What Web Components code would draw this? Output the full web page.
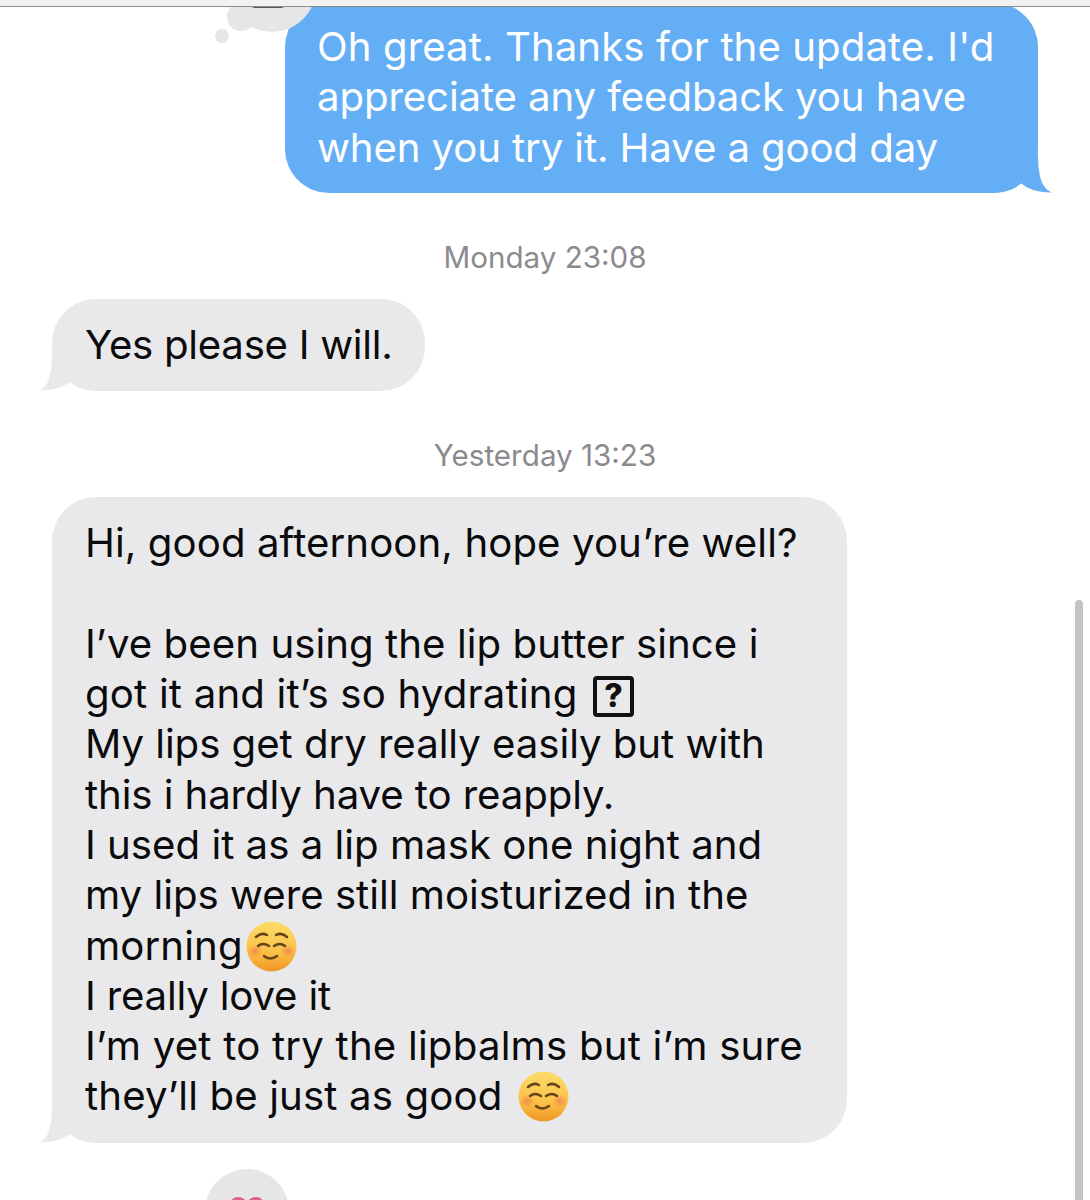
<!DOCTYPE html>
<html>
<head>
<meta charset="utf-8">
<style>
  html, body { margin: 0; background: #fff; }
  body { width: 1090px; height: 1200px; overflow: hidden; font-family: Inter, "Liberation Sans", sans-serif; }
</style>
</head>
<body>
<chat-window>
  <chat-bubble kind="sent" style="--w:753px">
    <chat-line style="--ls:.06px">Oh great. Thanks for the update. I'd</chat-line>
    <chat-line style="--ls:-.12px">appreciate any feedback you have</chat-line>
    <chat-line style="--ls:-.12px">when you try it. Have a good day</chat-line>
  </chat-bubble>
  <chat-time>Monday 23:08</chat-time>
  <chat-bubble kind="received" style="--w:373px">
    <chat-line style="--ls:-.28px">Yes please I will.</chat-line>
  </chat-bubble>
  <chat-time>Yesterday 13:23</chat-time>
  <chat-bubble kind="received" style="--w:795px">
    <chat-line style="--ls:.08px">Hi, good afternoon, hope you’re well?</chat-line>
    <chat-line></chat-line>
    <chat-line style="--ls:.05px">I’ve been using the lip butter since i</chat-line>
    <chat-line style="--ls:.18px">got it and it’s so hydrating <box-glyph></box-glyph></chat-line>
    <chat-line style="--ls:-.05px">My lips get dry really easily but with</chat-line>
    <chat-line style="--ls:-.1px">this i hardly have to reapply.</chat-line>
    <chat-line>I used it as a lip mask one night and</chat-line>
    <chat-line>my lips were still moisturized in the</chat-line>
    <chat-line style="--ls:.1px">morning<smile-emoji style="--gap:3px"></smile-emoji></chat-line>
    <chat-line style="--ls:-.19px">I really love it</chat-line>
    <chat-line style="--ls:.2px">I’m yet to try the lipbalms but i’m sure</chat-line>
    <chat-line style="--ls:.13px">they’ll be just as good <smile-emoji style="--gap:4px"></smile-emoji></chat-line>
  </chat-bubble>
  <tap-back></tap-back>
</chat-window>

<script>
class ChatWindow extends HTMLElement {
  constructor () {
    super()
    this.attachShadow({ mode: 'open' }).innerHTML = `
      <style>
        :host { display: block; position: relative; width: 1090px; height: 1200px; overflow: hidden; }
        .bar { height: 6px; background: #f2f2f2; border-bottom: 1px solid #8d8d8d; position: relative; z-index: 3; }
        .list { display: flex; flex-direction: column; }
        .thought { position: absolute; left: 0; top: 0; z-index: 2; }
        .scroll { position: absolute; left: 1075px; top: 600px; bottom: -20px; width: 8px; border-radius: 4px; background: #c4c4c4; z-index: 2; }
      </style>
      <div class="bar"></div>
      <svg class="thought" width="340" height="50" viewBox="0 0 340 50">
        <circle cx="222" cy="36" r="7" fill="#e6e6e8"/>
        <circle cx="241" cy="17" r="14" fill="#e6e6e8"/>
        <circle cx="272" cy="-12" r="44" fill="#e6e6e8"/>
        <path d="M252 8h32l-4 -2h-24z" fill="#55555a"/>
      </svg>
      <div class="list"><slot></slot></div>
      <div class="scroll"></div>
    `
  }
}

class ChatBubble extends HTMLElement {
  constructor () {
    super()
    this.attachShadow({ mode: 'open' }).innerHTML = `
      <style>
        :host { display: block; position: relative; box-sizing: border-box; width: var(--w); margin-left: 52px; padding: 21px 20px 21px 33px;
          border-radius: 44px; background: #e9e9eb; color: #0b0b0d; font-size: 40.2px; line-height: 50.3px; white-space: nowrap; }
        :host([kind="sent"]) { margin: -4px 0 0 285px; padding: 19px 20px 20px 32px; background: #64aef6; color: #fff; }
        .text { display: block; position: relative; z-index: 1; }
        svg { position: absolute; bottom: 0; }
        .in { left: -13px; }
        .out { right: -14px; }
      </style>
      <div class="text"><slot></slot></div>
      ${this.getAttribute('kind') === 'sent'
        ? '<svg class="out" width="64" height="40" viewBox="0 0 64 40"><path d="M0 40C16 40 26 36 33 30C39 36 52 40 64 39.500C55 36 50 26 50 0H0Z" fill="#64aef6"/></svg>'
        : '<svg class="in" width="64" height="40" viewBox="0 0 64 40"><path d="M64 40C48 40 38 36 31 31C25 36 12 40 0 39.500C9 36 13 26 13 0H64Z" fill="#e9e9eb"/></svg>'}
    `
  }
}

class ChatLine extends HTMLElement {
  constructor () {
    super()
    this.attachShadow({ mode: 'open' }).innerHTML = `
      <style>
        :host { display: block; height: 50.3px; letter-spacing: var(--ls, 0); }
      </style>
      <slot></slot>
    `
  }
}

class ChatTime extends HTMLElement {
  constructor () {
    super()
    this.attachShadow({ mode: 'open' }).innerHTML = `
      <style>
        :host { display: block; margin: 47px 0 25px; text-align: center; color: #8a8a8f; font-size: 29.600px; font-weight: 400; line-height: 34px; }
      </style>
      <slot></slot>
    `
  }
}

class BoxGlyph extends HTMLElement {
  constructor () {
    super()
    this.attachShadow({ mode: 'open' }).innerHTML = `
      <style>
        :host { display: inline-flex; box-sizing: border-box; width: 41px; height: 41px; margin-left: 4px; vertical-align: 1px; align-items: center; justify-content: center;
          border: 4px solid #111; border-radius: 4px; font: 800 32px/1 Inter, sans-serif; letter-spacing: 0; color: #111; }
      </style>
      ?
    `
  }
}

class SmileEmoji extends HTMLElement {
  constructor () {
    super()
    this.attachShadow({ mode: 'open' }).innerHTML = `
      <style>
        :host { display: inline-block; width: 51px; height: 51px; margin-left: var(--gap, 0); vertical-align: -12px; }
        svg { display: block; }
      </style>
      <svg width="51" height="51" viewBox="0 0 51 51">
        <defs>
          <linearGradient id="f" x1="0" y1="0" x2="0" y2="1">
            <stop offset="0" stop-color="#fddc6a"/>
            <stop offset=".6" stop-color="#fbc247"/>
            <stop offset="1" stop-color="#ef9526"/>
          </linearGradient>
          <radialGradient id="c">
            <stop offset="0" stop-color="#f27f4f" stop-opacity=".8"/>
            <stop offset="1" stop-color="#f27f4f" stop-opacity="0"/>
          </radialGradient>
        </defs>
        <circle cx="25.500" cy="25.500" r="25" fill="url(#f)"/>
        <ellipse cx="9" cy="30" rx="8" ry="6.500" fill="url(#c)"/>
        <ellipse cx="42" cy="30" rx="8" ry="6.500" fill="url(#c)"/>
        <g fill="none" stroke="#65441c" stroke-width="2.500" stroke-linecap="round">
          <path d="M10 16Q15 11 21 14"/>
          <path d="M30 14Q36 11 41 16"/>
          <path d="M12 25Q17 21 23 25"/>
          <path d="M28 25Q34 21 39 25"/>
          <path d="M18 35Q24 40 31 35"/>
        </g>
      </svg>
    `
  }
}

class TapBack extends HTMLElement {
  constructor () {
    super()
    this.attachShadow({ mode: 'open' }).innerHTML = `
      <style>
        :host { display: block; width: 84px; height: 84px; margin: 26px 0 0 205px; border-radius: 50%; background: #e6e6e8; position: relative; }
        svg { position: absolute; left: 25px; top: 28px; }
      </style>
      <svg width="34" height="30" viewBox="0 0 36 32"><path d="M18 30C6 20 0 14 0 8C0 3 4 0 8.500 0C12.500 0 16 2 18 6C20 2 23.500 0 27.500 0C32 0 36 3 36 8C36 14 30 20 18 30Z" fill="#e0608c"/></svg>
    `
  }
}

customElements.define('chat-window', ChatWindow)
customElements.define('chat-bubble', ChatBubble)
customElements.define('chat-line', ChatLine)
customElements.define('chat-time', ChatTime)
customElements.define('box-glyph', BoxGlyph)
customElements.define('smile-emoji', SmileEmoji)
customElements.define('tap-back', TapBack)
</script>
</body>
</html>
